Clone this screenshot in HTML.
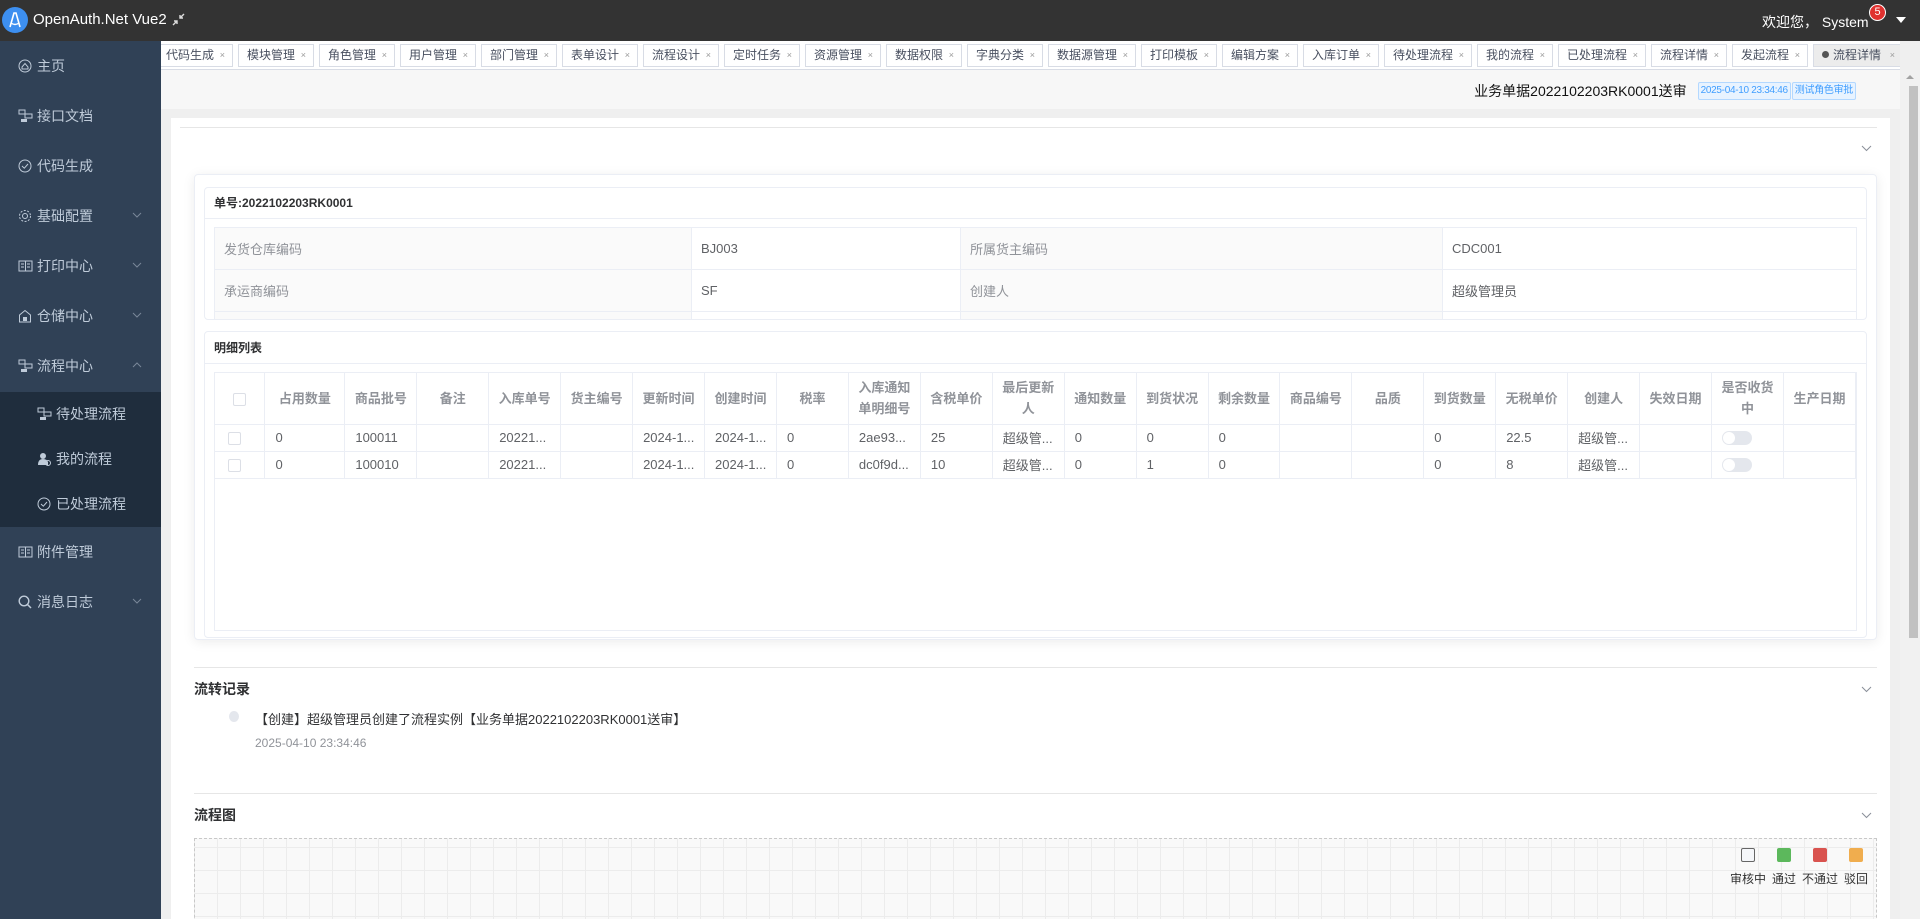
<!DOCTYPE html>
<html><head><meta charset="utf-8">
<style>
*{box-sizing:border-box;margin:0;padding:0}
html{overflow:hidden}
body{width:1920px;height:919px;overflow:hidden;font-family:"Liberation Sans","Noto Sans CJK SC",sans-serif;background:#efefef;position:relative;color:#303133}
.abs{position:absolute}
#hdr{left:0;top:0;width:1920px;height:41px;background:#333}
#side{left:0;top:41px;width:161px;height:878px;background:#304156}
.mi{position:absolute;left:0;width:161px;height:50px;color:#bfcbd9;font-size:14px;line-height:50px}
.mi .t{position:absolute;left:37px}
.mi svg{position:absolute;left:18px;top:18px}
.mi .ar{position:absolute;left:132px;top:21px}
.sub{height:45px;line-height:45px;background:#1f2d3d}
.sub .t{left:56px}
.sub svg{left:37px;top:15px}
#tabs{left:161px;top:41px;width:1739px;height:29px;background:#fff;border-bottom:1px solid #d8dce5;overflow:hidden}
#tabrow{position:absolute;left:-4px;top:3px;display:flex;white-space:nowrap}
.tab{height:23px;border:1px solid #d8dce5;margin-right:5px;font-size:12px;color:#495060;line-height:21px;padding-left:8px;width:76px;flex:none;position:relative;background:#fff}
.tab.w5{width:88px}
.tab i{position:absolute;right:7px;top:0;font-style:normal;font-size:9px;color:#999}
.tab.act{background:#ececec;width:90px}
#ttl{left:161px;top:70px;width:1739px;height:39px;background:#f7f7f7}
#trow{position:absolute;right:44px;top:11px;display:flex;align-items:center;white-space:nowrap}
.tag{height:18px;border:1px solid #b3d8ff;background:#e8f3ff;color:#409eff;font-size:10px;line-height:16px;padding:0 2px;border-radius:2px;white-space:nowrap;margin-left:1px;letter-spacing:-0.3px}
#card{left:171px;top:118px;width:1719px;height:801px;background:#fff}
.hl{position:absolute;height:1px;background:#e6e6e6}
.chev{position:absolute}
#inner{left:194px;top:174px;width:1683px;height:466px;background:#fff;border:1px solid #ebeef5;border-radius:4px;box-shadow:0 2px 12px rgba(0,0,0,.08)}
.panel{position:absolute;left:204px;width:1663px;border:1px solid #ebeef5;border-radius:4px;background:#fff;overflow:hidden}
.ph{height:31px;border-bottom:1px solid #ebeef5;font-size:12px;font-weight:bold;color:#303133;line-height:31px;padding-left:9px}
.desc{position:absolute;left:9px;top:39px;border-collapse:collapse;table-layout:fixed;font-size:13px}
.desc td{border:1px solid #ebeef5;height:42px;padding-left:9px;color:#606266}
.desc td.l{background:#fafafa;color:#909399}
.dt{position:absolute;left:9px;top:40px;width:1643px;height:259px;border:1px solid #ebeef5}
.dt table{border-collapse:collapse;table-layout:fixed;font-size:13px}
.dt th{height:51px;border-right:1px solid #ebeef5;border-bottom:1px solid #ebeef5;color:#909399;font-weight:bold;line-height:21px;padding:0 4px;text-align:center}
.dt td{height:27px;border-right:1px solid #ebeef5;border-bottom:1px solid #ebeef5;color:#606266;padding-left:10px;white-space:nowrap;overflow:hidden}
.cb{display:inline-block;width:13px;height:13px;border:1px solid #dcdfe6;border-radius:2px;background:#fff;vertical-align:middle}
.sw{display:inline-block;width:30px;height:14px;border-radius:7px;background:#e4e7ed;position:relative;vertical-align:middle}
.sw:after{content:"";position:absolute;left:1px;top:1px;width:12px;height:12px;border-radius:6px;background:#fff}
.sec{position:absolute;left:194px;font-size:14px;font-weight:bold;color:#303133}
#grid{left:194px;top:838px;width:1683px;height:90px;border:1px dashed #c8c8c8;background-color:#f9f9f9;background-image:linear-gradient(#ececec 1px,transparent 1px),linear-gradient(90deg,#ececec 1px,transparent 1px);background-size:23px 23px;background-position:-1px 8px}
.lg{position:absolute;top:848px;width:14px;height:14px;border-radius:2px}
.lt{position:absolute;top:870px;font-size:12px;color:#333;width:50px;text-align:center}
</style></head><body>
<div id="hdr" class="abs">
 <svg class="abs" style="left:2px;top:7px" width="26" height="26" viewBox="0 0 26 26"><circle cx="13" cy="13" r="13" fill="#3d8ff0"/><path d="M8 20 L12 6 L14 6 L18 20" fill="none" stroke="#fff" stroke-width="1.6"/><path d="M9 16 Q13 19 17 16" fill="none" stroke="#fff" stroke-width="1.4"/></svg>
 <div class="abs" style="left:33px;top:11px;color:#fff;font-size:15px">OpenAuth.Net Vue2</div>
 <svg class="abs" style="left:172px;top:13px" width="13" height="13" viewBox="0 0 13 13"><path d="M1 12 L5 8 M2 8 H5 V11 M12 1 L8 5 M8 2 V5 H11" fill="none" stroke="#ddd" stroke-width="1.4"/></svg>
 <div class="abs" style="left:1762px;top:12px;color:#fff;font-size:14px">欢迎您，&nbsp;System</div>
 <div class="abs" style="left:1869px;top:4px;width:17px;height:17px;border-radius:50%;background:#e0312f;border:1px solid #fff;color:#fff;font-size:11px;text-align:center;line-height:15px">5</div>
 <div class="abs" style="left:1896px;top:17px;width:0;height:0;border-left:5px solid transparent;border-right:5px solid transparent;border-top:6px solid #fff"></div>
</div>
<div id="side" class="abs">
 <div class="mi" style="top:0"><svg width="14" height="14" viewBox="0 0 14 14"><circle cx="7" cy="7" r="6" fill="none" stroke="#bfcbd9"/><path d="M4 8 L7 4.5 L10 8 V10 H4Z" fill="none" stroke="#bfcbd9"/></svg><span class="t">主页</span></div>
 <div class="mi" style="top:50px"><svg width="15" height="14" viewBox="0 0 15 14"><rect x="1" y="1" width="6" height="4" fill="none" stroke="#bfcbd9"/><rect x="7" y="5" width="7" height="4" fill="none" stroke="#bfcbd9"/><rect x="3" y="10" width="6" height="3" fill="#bfcbd9"/></svg><span class="t">接口文档</span></div>
 <div class="mi" style="top:100px"><svg width="14" height="14" viewBox="0 0 14 14"><circle cx="7" cy="7" r="6" fill="none" stroke="#bfcbd9"/><path d="M4 7 L6.3 9.2 L10 5" fill="none" stroke="#bfcbd9"/></svg><span class="t">代码生成</span></div>
 <div class="mi" style="top:150px"><svg width="14" height="14" viewBox="0 0 14 14"><circle cx="7" cy="7" r="2.5" fill="none" stroke="#bfcbd9"/><circle cx="7" cy="7" r="5.5" fill="none" stroke="#bfcbd9" stroke-dasharray="2 1.5"/></svg><span class="t">基础配置</span><svg class="ar" width="10" height="6" viewBox="0 0 10 6"><path d="M1 1 L5 5 L9 1" fill="none" stroke="#7a8799"/></svg></div>
 <div class="mi" style="top:200px"><svg width="15" height="14" viewBox="0 0 15 14"><rect x="1" y="2" width="13" height="10" fill="none" stroke="#bfcbd9"/><path d="M7.5 2 V12 M3 5 H6 M3 8 H6 M9 5 H12 M9 8 H12" stroke="#bfcbd9"/></svg><span class="t">打印中心</span><svg class="ar" width="10" height="6" viewBox="0 0 10 6"><path d="M1 1 L5 5 L9 1" fill="none" stroke="#7a8799"/></svg></div>
 <div class="mi" style="top:250px"><svg width="14" height="14" viewBox="0 0 14 14"><path d="M1.5 6 L7 1.5 L12.5 6 V13 H1.5Z" fill="none" stroke="#bfcbd9"/><rect x="5" y="8" width="4" height="4" fill="#bfcbd9"/></svg><span class="t">仓储中心</span><svg class="ar" width="10" height="6" viewBox="0 0 10 6"><path d="M1 1 L5 5 L9 1" fill="none" stroke="#7a8799"/></svg></div>
 <div class="mi" style="top:300px"><svg width="15" height="14" viewBox="0 0 15 14"><rect x="1" y="1" width="6" height="4" fill="none" stroke="#bfcbd9"/><rect x="7" y="5" width="7" height="4" fill="none" stroke="#bfcbd9"/><rect x="3" y="10" width="6" height="3" fill="#bfcbd9"/></svg><span class="t">流程中心</span><svg class="ar" width="10" height="6" viewBox="0 0 10 6"><path d="M1 5 L5 1 L9 5" fill="none" stroke="#7a8799"/></svg></div>
 <div class="mi sub" style="top:351px"><svg width="15" height="14" viewBox="0 0 15 14"><rect x="1" y="1" width="6" height="4" fill="none" stroke="#bfcbd9"/><rect x="7" y="5" width="7" height="4" fill="none" stroke="#bfcbd9"/><rect x="3" y="10" width="6" height="3" fill="#bfcbd9"/></svg><span class="t">待处理流程</span></div>
 <div class="mi sub" style="top:396px"><svg width="14" height="14" viewBox="0 0 14 14"><circle cx="6" cy="4" r="3" fill="#bfcbd9"/><path d="M1 13 Q1 7 6 7 Q10 7 11 10 V13Z" fill="#bfcbd9"/><circle cx="11" cy="11" r="2.5" fill="none" stroke="#bfcbd9"/></svg><span class="t">我的流程</span></div>
 <div class="mi sub" style="top:441px"><svg width="14" height="14" viewBox="0 0 14 14"><circle cx="7" cy="7" r="6" fill="none" stroke="#bfcbd9"/><path d="M4 7 L6.3 9.2 L10 5" fill="none" stroke="#bfcbd9"/></svg><span class="t">已处理流程</span></div>
 <div class="mi" style="top:486px"><svg width="15" height="14" viewBox="0 0 15 14"><rect x="1" y="2" width="13" height="10" fill="none" stroke="#bfcbd9"/><path d="M7.5 2 V12 M3 5 H6 M3 8 H6 M9 5 H12 M9 8 H12" stroke="#bfcbd9"/></svg><span class="t">附件管理</span></div>
 <div class="mi" style="top:536px"><svg width="14" height="14" viewBox="0 0 14 14"><circle cx="6" cy="6" r="4.8" fill="none" stroke="#bfcbd9" stroke-width="1.4"/><path d="M9.5 9.5 L13 13" stroke="#bfcbd9" stroke-width="1.5"/></svg><span class="t">消息日志</span><svg class="ar" width="10" height="6" viewBox="0 0 10 6"><path d="M1 1 L5 5 L9 1" fill="none" stroke="#7a8799"/></svg></div>
</div>
<div id="tabs" class="abs"><div id="tabrow">
 <div class="tab">代码生成<i>×</i></div><div class="tab">模块管理<i>×</i></div><div class="tab">角色管理<i>×</i></div><div class="tab">用户管理<i>×</i></div><div class="tab">部门管理<i>×</i></div><div class="tab">表单设计<i>×</i></div><div class="tab">流程设计<i>×</i></div><div class="tab">定时任务<i>×</i></div><div class="tab">资源管理<i>×</i></div><div class="tab">数据权限<i>×</i></div><div class="tab">字典分类<i>×</i></div><div class="tab w5">数据源管理<i>×</i></div><div class="tab">打印模板<i>×</i></div><div class="tab">编辑方案<i>×</i></div><div class="tab">入库订单<i>×</i></div><div class="tab w5">待处理流程<i>×</i></div><div class="tab">我的流程<i>×</i></div><div class="tab w5">已处理流程<i>×</i></div><div class="tab">流程详情<i>×</i></div><div class="tab">发起流程<i>×</i></div><div class="tab act"><span style="display:inline-block;width:7px;height:7px;border-radius:50%;background:#555;margin-right:4px;vertical-align:1px"></span>流程详情<i>×</i></div>
</div></div>
<div id="ttl" class="abs">
 <div id="trow"><span style="font-size:14px;color:#111;margin-right:10px">业务单据2022102203RK0001送审</span><span class="tag">2025-04-10 23:34:46</span><span class="tag">测试角色审批</span></div>
</div>
<div id="card" class="abs"></div>
<div class="hl" style="left:180px;top:127px;width:1697px"></div>
<svg class="chev" style="left:1861px;top:145px" width="11" height="7" viewBox="0 0 11 7"><path d="M1 1 L5.5 5.5 L10 1" fill="none" stroke="#8a8f99"/></svg>
<div id="inner" class="abs"></div>
<div class="panel" style="top:187px;height:133px">
 <div class="ph">单号:2022102203RK0001</div>
 <table class="desc"><colgroup><col style="width:477px"><col style="width:269px"><col style="width:482px"><col style="width:414px"></colgroup>
 <tr><td class="l">发货仓库编码</td><td>BJ003</td><td class="l">所属货主编码</td><td>CDC001</td></tr>
 <tr><td class="l">承运商编码</td><td>SF</td><td class="l">创建人</td><td>超级管理员</td></tr>
 <tr><td class="l"></td><td></td><td class="l"></td><td></td></tr></table>
</div>
<div class="panel" style="top:331px;height:307px">
 <div class="ph" style="height:32px;line-height:32px">明细列表</div>
 <div class="dt"><table><colgroup><col style="width:50px"><col style="width:80px"><col span="21" style="width:72px"></colgroup>
 <tr><th><span class="cb"></span></th><th>占用数量</th><th>商品批号</th><th>备注</th><th>入库单号</th><th>货主编号</th><th>更新时间</th><th>创建时间</th><th>税率</th><th>入库通知单明细号</th><th>含税单价</th><th>最后更新人</th><th>通知数量</th><th>到货状况</th><th>剩余数量</th><th>商品编号</th><th>品质</th><th>到货数量</th><th>无税单价</th><th>创建人</th><th>失效日期</th><th>是否收货中</th><th>生产日期</th></tr>
 <tr><td style="padding-left:13px"><span class="cb"></span></td><td>0</td><td>100011</td><td></td><td>20221...</td><td></td><td>2024-1...</td><td>2024-1...</td><td>0</td><td>2ae93...</td><td>25</td><td>超级管...</td><td>0</td><td>0</td><td>0</td><td></td><td></td><td>0</td><td>22.5</td><td>超级管...</td><td></td><td><span class="sw"></span></td><td></td></tr>
 <tr><td style="padding-left:13px"><span class="cb"></span></td><td>0</td><td>100010</td><td></td><td>20221...</td><td></td><td>2024-1...</td><td>2024-1...</td><td>0</td><td>dc0f9d...</td><td>10</td><td>超级管...</td><td>0</td><td>1</td><td>0</td><td></td><td></td><td>0</td><td>8</td><td>超级管...</td><td></td><td><span class="sw"></span></td><td></td></tr>
 </table></div>
</div>
<div class="hl" style="left:194px;top:667px;width:1683px"></div>
<div class="sec" style="top:679px">流转记录</div>
<svg class="chev" style="left:1861px;top:686px" width="11" height="7" viewBox="0 0 11 7"><path d="M1 1 L5.5 5.5 L10 1" fill="none" stroke="#8a8f99"/></svg>
<div class="abs" style="left:229px;top:711px;width:10px;height:11px;border-radius:50%;background:#e4e7ed"></div>
<div class="abs" style="left:255px;top:709px;font-size:13px;color:#303133">【创建】超级管理员创建了流程实例【业务单据2022102203RK0001送审】</div>
<div class="abs" style="left:255px;top:736px;font-size:12px;color:#909399">2025-04-10 23:34:46</div>
<div class="hl" style="left:194px;top:793px;width:1683px"></div>
<div class="sec" style="top:805px">流程图</div>
<svg class="chev" style="left:1861px;top:812px" width="11" height="7" viewBox="0 0 11 7"><path d="M1 1 L5.5 5.5 L10 1" fill="none" stroke="#8a8f99"/></svg>
<div id="grid" class="abs"></div>
<div class="lg" style="left:1741px;background:#f5f7fa;border:1px solid #666"></div>
<div class="lg" style="left:1777px;background:#5cb85c"></div>
<div class="lg" style="left:1813px;background:#d9534f"></div>
<div class="lg" style="left:1849px;background:#f0ad4e"></div>
<div class="lt" style="left:1723px">审核中</div>
<div class="lt" style="left:1759px">通过</div>
<div class="lt" style="left:1795px">不通过</div>
<div class="lt" style="left:1831px">驳回</div>
<div class="abs" style="left:1900px;top:70px;width:20px;height:849px;background:#f1f1f1"></div>
<div class="abs" style="left:1909px;top:86px;width:9px;height:552px;background:#c1c1c1"></div>
<div class="abs" style="left:1906px;top:75px;width:0;height:0;border-left:4px solid transparent;border-right:4px solid transparent;border-bottom:4px solid #a3a3a3"></div>
</body></html>
